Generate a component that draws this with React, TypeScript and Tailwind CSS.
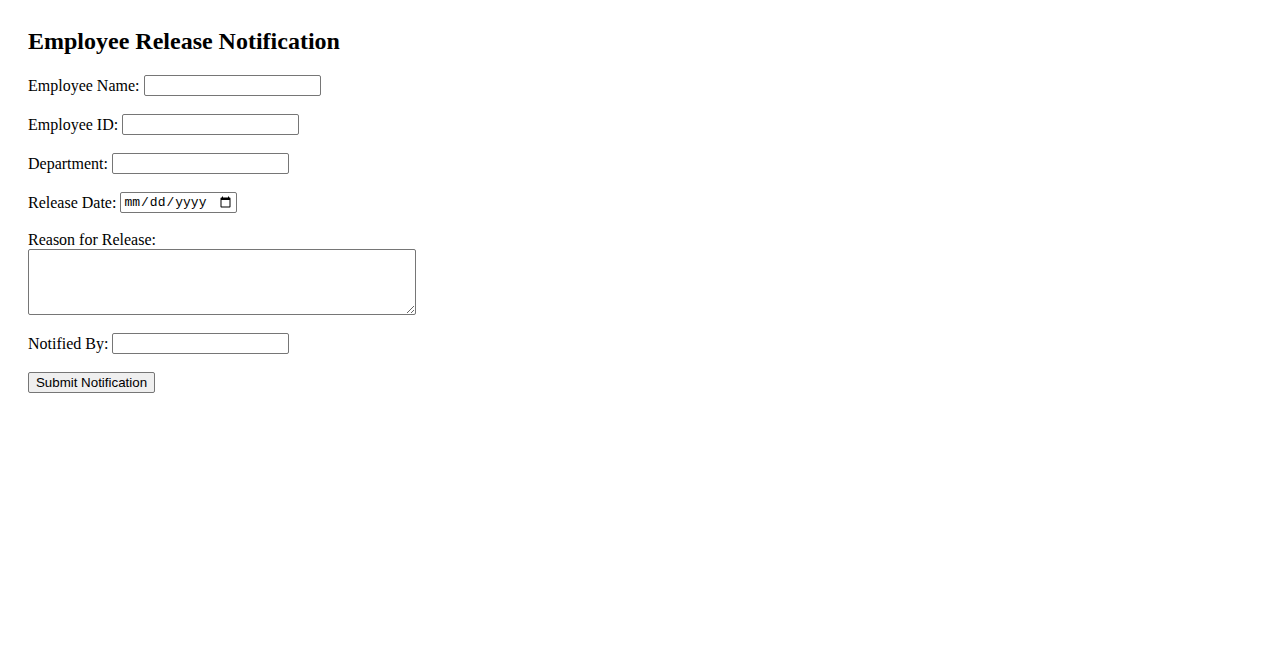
const serif = "font-['Liberation_Serif','Times_New_Roman',serif]"
const box = 'border border-[#767676] rounded-[2px] bg-white'

function Row({ label, width = 'w-[177px]', type = 'text', last = false }: { label: string; width?: string; type?: string; last?: boolean }) {
  return (
    <div className={`flex items-center h-[23px] ${last ? 'mb-[17px]' : 'mb-[16px]'}`}>
      <label className="mr-[4px]">{label}</label>
      {type === 'date' ? (
        <input
          type="date"
          className={`${box} ${width} h-[21px] px-[2px] text-[13px] font-['Liberation_Mono','Courier_New',monospace] text-black`}
        />
      ) : (
        <input type="text" className={`${box} ${width} h-[21px] px-[2px] text-[13px]`} />
      )}
    </div>
  )
}

export default function App() {
  return (
    <div className={`min-h-screen bg-white text-black text-[16px] ${serif} pt-[27px] px-[28px]`}>
      <h2 className="text-[24px] font-bold leading-[28px] mb-[19px]">Employee Release Notification</h2>

      <form onSubmit={e => e.preventDefault()}>
        <Row label="Employee Name:" />
        <Row label="Employee ID:" />
        <Row label="Department:" />
        <Row label="Release Date:" type="date" width="w-[117px]" last />

        <label className="block leading-[18px]">Reason for Release:</label>
        <textarea className={`${box} block w-[388px] h-[66px] mb-[17px] resize`} />

        <Row label="Notified By:" last />

        <button
          type="submit"
          className="block w-[127px] h-[21px] bg-[#efefef] border border-[#767676] rounded-[2px] text-[13.33px] leading-none font-['Liberation_Sans',Arial,sans-serif] text-black"
        >
          Submit Notification
        </button>
      </form>
    </div>
  )
}
